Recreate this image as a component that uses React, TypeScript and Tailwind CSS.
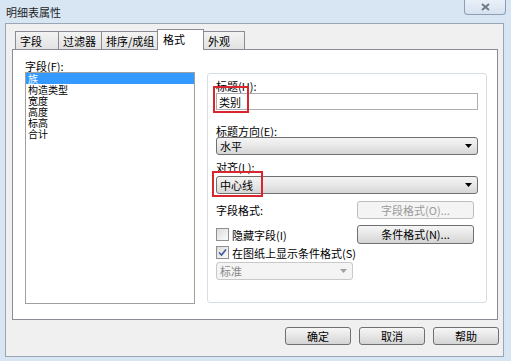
import React from 'react';

const font = 'font-["Noto_Sans_CJK_SC","Liberation_Sans",sans-serif]';

const Arrow = ({ muted }: { muted?: boolean }) => (
  <svg width="7" height="4" viewBox="0 0 7 4" className="mr-[5px]">
    <path d="M0 0 L7 0 L3.5 4 Z" fill={muted ? '#a0a0a0' : '#000'} />
  </svg>
);

const Select = ({ value, w = 'w-[262px]', muted }: { value: string; w?: string; muted?: boolean }) => (
  <div
    className={`${w} h-[18px] flex items-center justify-between rounded-[3px] border ${
      muted
        ? 'border-[#c9c9c9] bg-[#f4f4f4] text-[#8a8a8a]'
        : 'border-[#707070] bg-gradient-to-b from-[#f4f4f4] via-[#e8e8e8] to-[#d6d6d6]'
    }`}
  >
    <span className="pl-[3px] leading-[12px]">{value}</span>
    <Arrow muted={muted} />
  </div>
);

const Button = ({ label, w, disabled }: { label: string; w: string; disabled?: boolean }) => (
  <div
    className={`${w} flex items-center justify-center whitespace-nowrap rounded-[3px] border ${
      disabled
        ? 'border-[#bdbdbd] bg-[#f4f4f4] text-[#9a9a9a]'
        : 'border-[#707070] bg-gradient-to-b from-[#f6f6f6] via-[#e6e6e6] to-[#d4d4d4]'
    }`}
  >
    {label}
  </div>
);

const Checkbox = ({ checked }: { checked?: boolean }) => (
  <div className="w-[13px] h-[13px] border border-[#8f8f8f] bg-gradient-to-br from-[#dcdcdc] to-[#fbfbfb] flex items-center justify-center mr-[3px]">
    {checked && (
      <svg width="9" height="9" viewBox="0 0 9 9">
        <path d="M1 4.5 L3.5 7 L8 1.5" stroke="#3b5b9a" strokeWidth="1.6" fill="none" />
      </svg>
    )}
  </div>
);

const tabs = ['字段', '过滤器', '排序/成组', '格式', '外观'];
const tabWidths = ['w-[44px]', 'w-[44px]', 'w-[58px]', 'w-[47px]', 'w-[42px]'];
const fields = ['族', '构造类型', '宽度', '高度', '标高', '合计'];

export default function App() {
  return (
    <div className={`w-[511px] h-[361px] bg-[#d8e6f4] overflow-hidden text-[11px] text-black ${font}`}>
      {/* title bar */}
      <div className="h-[23px] flex items-start justify-between">
        <span className="pl-[6px] pt-[5px] leading-[14px] text-[#1e1e1e]">明细表属性</span>
        <div className="mr-[5px] w-[42px] h-[15px] rounded-b-[4px] border border-t-0 border-[#8d9db2] bg-gradient-to-b from-[#e9f0f8] to-[#d6e2ef] flex items-center justify-center">
          <svg width="9" height="8" viewBox="0 0 9 8">
            <path d="M1 1 L8 7 M8 1 L1 7" stroke="#6b7788" strokeWidth="1.8" />
          </svg>
        </div>
      </div>

      {/* client area */}
      <div className="ml-[5px] w-[499px] h-[334px] bg-[#f0f0f0] border border-[#9aa6b6] pt-[6px] pl-[6px] flex flex-col">
        {/* tabs */}
        <div className="flex items-end h-[19px] pl-[3px] relative z-10">
          {tabs.map((t, i) =>
            t === '格式' ? (
              <div
                key={t}
                className={`${tabWidths[i]} h-[21px] -mb-[1px] -mx-[1px] bg-white border border-b-0 border-[#898c95] pl-[5px] pt-[2px] leading-[14px] whitespace-nowrap`}
              >
                {t}
              </div>
            ) : (
              <div
                key={t}
                className={`${tabWidths[i]} h-[18px] bg-gradient-to-b from-[#f3f3f3] to-[#e2e2e2] border border-[#898c95] border-b-0 -mr-[1px] pl-[4px] pt-[2px] leading-[14px] whitespace-nowrap`}
              >
                {t}
              </div>
            )
          )}
        </div>

        {/* panel */}
        <div className="w-[486px] h-[271px] bg-white border border-[#898c95] flex pl-[12px]">
          <div className="flex flex-col pt-[10px]">
            <span className="leading-[12px] h-[12px]">字段(F):</span>
            <div className="w-[170px] h-[232px] border border-[#a0a0a0] overflow-hidden">
              {fields.map((f, i) => (
                <div
                  key={f}
                  className={`h-[11px] leading-[11px] text-[10px] pl-[2px] ${
                    i === 0 ? 'bg-[#3399ff] text-white' : ''
                  }`}
                >
                  {f}
                </div>
              ))}
            </div>
          </div>

          <div className="ml-[12px] mt-[23px] w-[280px] h-[230px] border border-[#d5dfe5] rounded-[3px] pl-[8px] pr-[8px] pt-[6px] flex flex-col">
            <span className="leading-[12px]">标题(H):</span>
            <div className="relative mt-[1px] w-[262px] h-[17px] border border-[#abadb3] flex items-center pl-[2px]">
              <span className="leading-[12px]">类别</span>
              <div className="absolute -left-[4px] -top-[8px] w-[36px] h-[27px] border-2 border-[#d9262e]" />
            </div>

            <span className="leading-[12px] mt-[15px]">标题方向(E):</span>
            <Select value="水平" />

            <span className="leading-[12px] mt-[6px]">对齐(L):</span>
            <div className="relative mt-[3px]">
              <Select value="中心线" />
              <div className="absolute -left-[4px] -top-[5px] w-[51px] h-[26px] border-2 border-[#d9262e]" />
            </div>

            <div className="flex items-center justify-between mt-[7px] pr-[4px] h-[18px]">
              <span className="leading-[12px]">字段格式:</span>
              <Button label="字段格式(O)..." w="w-[117px] h-[18px]" disabled />
            </div>

            <div className="flex items-center justify-between mt-[6px] pr-[4px] h-[19px]">
              <div className="flex items-center">
                <Checkbox />
                <span className="leading-[12px]">隐藏字段(I)</span>
              </div>
              <Button label="条件格式(N)..." w="w-[117px] h-[19px]" />
            </div>

            <div className="flex items-center mt-[1px] h-[15px]">
              <Checkbox checked />
              <span className="leading-[12px]">在图纸上显示条件格式(S)</span>
            </div>

            <div className="mt-[2px]">
              <Select value="标准" w="w-[137px]" muted />
            </div>
          </div>
        </div>

        {/* footer buttons */}
        <div className="flex justify-end gap-[8px] pr-[4px] mt-[7px]">
          <Button label="确定" w="w-[66px] h-[18px]" />
          <Button label="取消" w="w-[66px] h-[18px]" />
          <Button label="帮助" w="w-[66px] h-[18px]" />
        </div>
      </div>
    </div>
  );
}
